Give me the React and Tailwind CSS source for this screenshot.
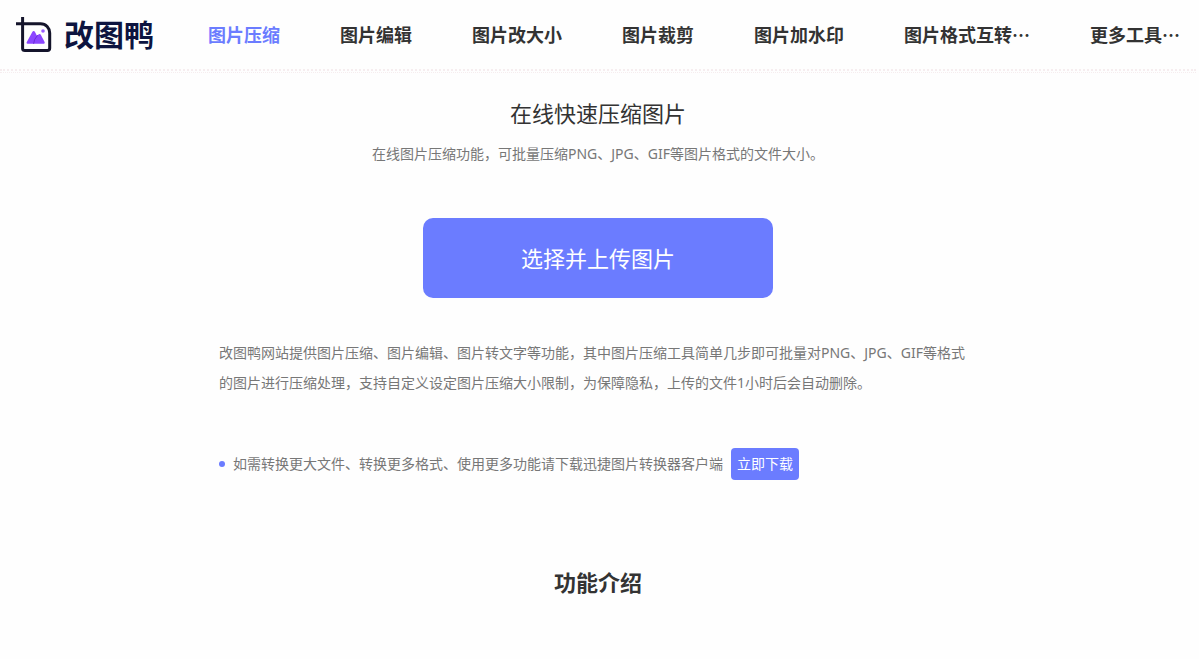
const navItems = [
  { label: "图片压缩", active: true },
  { label: "图片编辑" },
  { label: "图片改大小" },
  { label: "图片裁剪" },
  { label: "图片加水印" },
  { label: "图片格式互转…" },
  { label: "更多工具…" },
];

function LogoMark() {
  return (
    <svg width="36" height="36" viewBox="0 0 36 36" fill="none" aria-hidden="true">
      <path d="M0 6.8H24.5C30 6.8 33.7 11 33.7 16V31.2C33.7 32.8 32.8 33.4 31.4 33.4H9C7.4 33.4 6.6 32.8 6.6 31.4V0" stroke="#14142b" strokeWidth="3" />
      <path d="M11.5 26.8C10.6 26.8 10.3 26 10.8 25.1L16.3 15C17 13.8 18.4 13.8 19 15L20.8 18.4L23 17.2C23.7 16.8 24.4 17 24.8 17.7L28.6 25.1C29 26 28.7 26.8 27.8 26.8Z" fill="#8b46ff" />
      <path d="M21.6 18.2L18.6 22.6L17.6 26.8" stroke="#6a2ad8" strokeWidth="1" />
      <circle cx="27" cy="14" r="1.8" fill="#9a5cff" />
    </svg>
  );
}

function Header() {
  return (
    <header className="flex h-[71px] items-center justify-between border-b-2 border-dotted border-[#f6edef] px-4">
      <a href="#" className="flex items-center gap-3">
        <LogoMark />
        <span className="pb-1 text-[30px] leading-9 font-bold text-[#0d1440]">改图鸭</span>
      </a>
      <nav className="flex gap-[60px] pb-0.5">
        {navItems.map((item) => (
          <a
            key={item.label}
            href="#"
            className={`text-lg leading-7 font-bold whitespace-nowrap ${item.active ? "text-[#6b7cff]" : "text-[#333333]"}`}
          >
            {item.label}
          </a>
        ))}
      </nav>
    </header>
  );
}

export default function App() {
  return (
    <div lang="zh-CN" className="min-h-screen bg-[#fefefe] pr-[3px] font-['Noto_Sans_CJK_SC',sans-serif]">
      <Header />
      <main className="mt-px flex flex-col items-center border-t border-dotted border-[#f6edef] pt-[21px]">
        <h1 className="text-[22px] leading-9 text-[#333333]">在线快速压缩图片</h1>
        <p className="mt-[10px] font-['Noto_Sans','Noto_Sans_CJK_SC',sans-serif] text-sm leading-7 text-[#777777]">
          在线图片压缩功能，可批量压缩PNG、JPG、GIF等图片格式的文件大小。
        </p>
        <button type="button" className="mt-[50px] h-20 w-[350px] rounded-[10px] bg-[#6b7cff] pb-0.5 text-[22px] text-white">
          选择并上传图片
        </button>

        <section className="mt-10 w-full max-w-[758px] font-['Noto_Sans','Noto_Sans_CJK_SC',sans-serif] text-sm text-[#777777]">
          <p className="leading-[30px]">
            改图鸭网站提供图片压缩、图片编辑、图片转文字等功能，其中图片压缩工具简单几步即可批量对PNG、JPG、GIF等格式的图片进行压缩处理，支持自定义设定图片压缩大小限制，为保障隐私，上传的文件1小时后会自动删除。
          </p>
          <div className="mt-[50px] flex items-center gap-2">
            <span className="size-1.5 rounded-full bg-[#6b7cff]" />
            <span>如需转换更大文件、转换更多格式、使用更多功能请下载迅捷图片转换器客户端</span>
            <a href="#" className="flex h-8 items-center rounded bg-[#6b7cff] px-1.5 text-white">
              立即下载
            </a>
          </div>
        </section>

        <h2 className="mt-[83px] text-[22px] leading-9 font-bold text-[#333333]">功能介绍</h2>
      </main>
    </div>
  );
}
